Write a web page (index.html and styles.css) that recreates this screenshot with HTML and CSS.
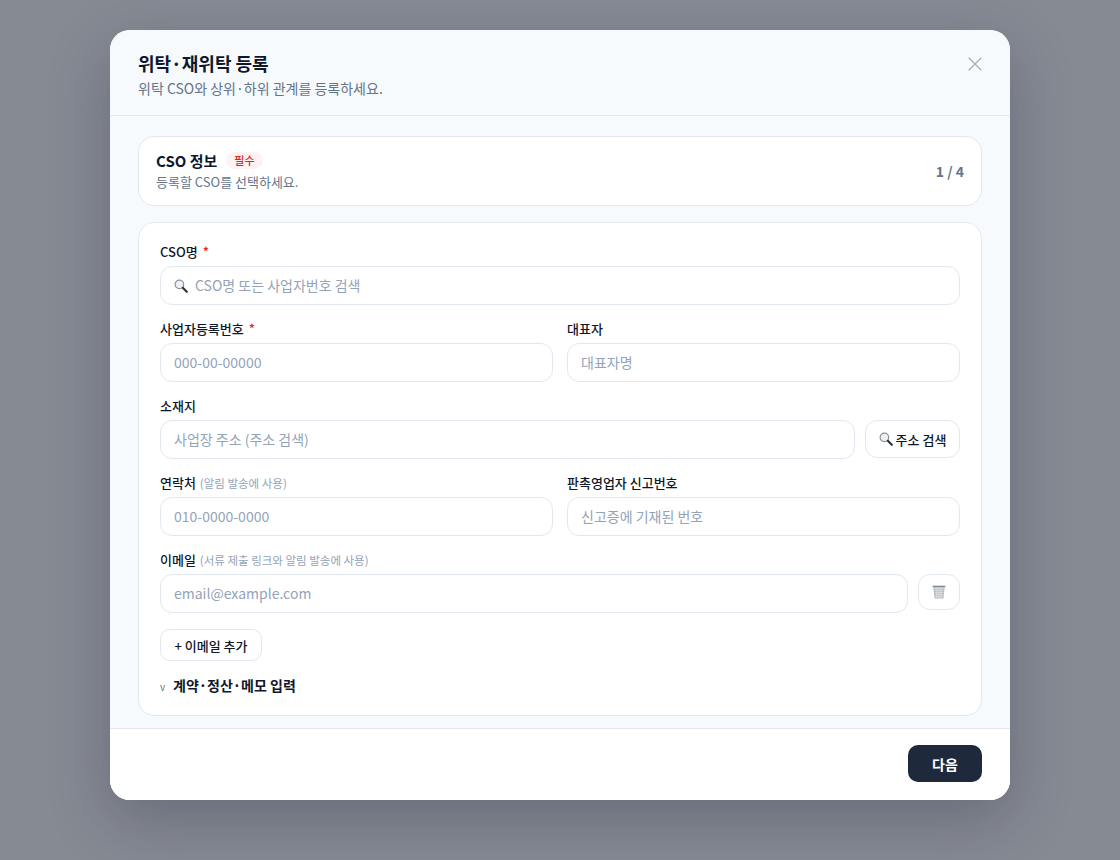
FILE: index.html
```html
<!DOCTYPE html>
<html>
<head>
<meta charset="utf-8">
<title>위탁·재위탁 등록</title>
<link rel="stylesheet" href="styles.css">
</head>
<body>
<div class="overlay">
  <div class="modal">
    <header class="modal-head">
      <div>
        <h1 class="title">위탁·재위탁 등록</h1>
        <p class="subtitle">위탁 CSO와 상위·하위 관계를 등록하세요.</p>
      </div>
      <svg class="close" viewBox="0 0 14 14" width="14" height="14"><path d="M.7.7l12.6 12.6M13.3.7L.7 13.3"/></svg>
    </header>
    <div class="modal-body">
      <section class="step">
        <div>
          <div class="step-title"><strong>CSO 정보</strong><span class="badge">필수</span></div>
          <p class="step-desc">등록할 CSO를 선택하세요.</p>
        </div>
        <span class="step-count">1 / 4</span>
      </section>
      <section class="form">
        <div class="field">
          <label class="label">CSO명 <em>*</em></label>
          <div class="input search"><svg class="glass" viewBox="0 0 14 14" width="14" height="14"><circle class="lens" cx="5.4" cy="5.4" r="4.3"/><path class="handle" d="M8.8 8.8l4 4"/></svg><span>CSO명 또는 사업자번호 검색</span></div>
        </div>
        <div class="cols">
          <div class="field">
            <label class="label">사업자등록번호 <em>*</em></label>
            <div class="input">000-00-00000</div>
          </div>
          <div class="field">
            <label class="label">대표자</label>
            <div class="input">대표자명</div>
          </div>
        </div>
        <div class="field">
          <label class="label">소재지</label>
          <div class="row">
            <div class="input grow">사업장 주소 (주소 검색)</div>
            <button class="btn addr"><svg class="glass" viewBox="0 0 14 14" width="14" height="14"><circle class="lens" cx="5.4" cy="5.4" r="4.3"/><path class="handle" d="M8.8 8.8l4 4"/></svg>주소 검색</button>
          </div>
        </div>
        <div class="cols">
          <div class="field">
            <label class="label">연락처 <small>(알림 발송에 사용)</small></label>
            <div class="input">010-0000-0000</div>
          </div>
          <div class="field">
            <label class="label">판촉영업자 신고번호</label>
            <div class="input">신고증에 기재된 번호</div>
          </div>
        </div>
        <div class="field">
          <label class="label">이메일 <small>(서류 제출 링크와 알림 발송에 사용)</small></label>
          <div class="row">
            <div class="input grow">email@example.com</div>
            <button class="btn trash"><svg viewBox="0 0 14 14" width="14" height="14"><path class="bin" d="M1.2 1h11.6l-1.3 11.8a.8.8 0 0 1-.8.7H3.3a.8.8 0 0 1-.8-.7z"/><path class="mesh" d="M2 3.5h10M2.3 5.5h9.4M2.5 7.5h9M2.7 9.5h8.6M2.9 11.5h8.2M4 2l.8 11M6 2l.4 11M8 2l-.4 11M10 2l-.8 11"/><path class="rim" d="M.6 1.3h12.8"/></svg></button>
          </div>
        </div>
        <button class="btn add">+ 이메일 추가</button>
        <div class="more"><span class="chev">v</span><strong>계약·정산·메모 입력</strong></div>
      </section>
    </div>
    <footer class="modal-foot"><button class="next">다음</button></footer>
  </div>
</div>
</body>
</html>
```
FILE: styles.css
```css
* { box-sizing: border-box; }
html, body { margin: 0; height: 100%; }
body {
  font-family: "Noto Sans CJK JP", "Noto Sans", sans-serif;
  color: #0f172a;
  background: #fff;
}
.overlay {
  height: 860px;
  background: #868a93;
  padding-top: 30px;
  display: flex;
  align-items: flex-start;
  justify-content: center;
}
.modal {
  width: 900px;
  height: 770px;
  border-radius: 20px;
  background: #fff;
  overflow: hidden;
  display: flex;
  flex-direction: column;
  box-shadow: 0 20px 60px rgba(15, 23, 42, .25);
}
.modal-head {
  height: 86px;
  flex: none;
  background: #f7fafd;
  border-bottom: 1px solid #e2e8f0;
  padding: 18px 28px 0;
  display: flex;
  justify-content: space-between;
  align-items: flex-start;
}
.title { margin: 0; font-size: 18px; line-height: 30px; font-weight: 700; }
.subtitle { margin: 0; font-size: 14px; line-height: 20px; color: #64748b; }
.close { margin: 9px 0 0; }
.close path { fill: none; stroke: #a6afbe; stroke-width: 1.3; }
.modal-body {
  flex: 1;
  background: #f7fafd;
  padding: 20px 28px 12px;
  display: flex;
  flex-direction: column;
  gap: 16px;
}
.step {
  height: 70px;
  border: 1px solid #e2e8f0;
  border-radius: 16px;
  background: #fff;
  padding: 0 17px;
  display: flex;
  align-items: center;
  justify-content: space-between;
}
.step-title { display: flex; align-items: center; gap: 9px; height: 20px; margin-top: -1px; font-size: 15px; }
.step-title strong { font-weight: 700; }
.badge {
  background: #fef2f2;
  color: #e02424;
  font-size: 11px;
  font-weight: 500;
  line-height: 17px;
  height: 17px;
  padding: 0 8px;
  border-radius: 9px;
}
.step-desc { margin: 2px 0 0; font-size: 13px; line-height: 19px; color: #64748b; }
.step-count { font-size: 14px; font-weight: 700; color: #64748b; }
.form {
  flex: 1;
  border: 1px solid #e2e8f0;
  border-radius: 16px;
  background: #fff;
  padding: 19px 21px 0;
  display: flex;
  flex-direction: column;
  align-items: stretch;
}
.field { margin-bottom: 14px; min-width: 0; }
.label { display: block; height: 24px; font-size: 13px; line-height: 20px; font-weight: 500; color: #0f172a; }
.label em { font-style: normal; color: #e02424; margin-left: 2px; }
.label small { font-size: 11.5px; font-weight: 400; color: #94a3b8; margin-left: 1px; }
.input {
  height: 39px;
  border: 1px solid #e2e8f0;
  border-radius: 12px;
  background: #fff;
  padding: 0 13px;
  font-size: 14px;
  line-height: 37px;
  color: #94a3b8;
}
.search { display: flex; align-items: center; gap: 7px; }
.cols { display: grid; grid-template-columns: 1fr 1fr; gap: 14px; }
.row { display: flex; gap: 10px; align-items: flex-start; }
.grow { flex: 1; }
.btn {
  border: 1px solid #e2e8f0;
  border-radius: 10px;
  background: #fff;
  font-family: inherit;
  color: #0f172a;
  font-size: 13px;
  font-weight: 500;
  padding: 0;
}
.addr { width: 95px; height: 38px; border-radius: 12px; display: flex; align-items: center; justify-content: center; gap: 3px; }
.trash { width: 42px; height: 36px; border-radius: 12px; display: flex; align-items: center; justify-content: center; }
.add { width: 102px; height: 32px; margin-top: 2px; }
.glass { flex: none; }
.lens { fill: #eef1f4; stroke: #8a929c; stroke-width: 1.2; }
.handle { stroke: #2f3338; stroke-width: 2.2; stroke-linecap: round; }
.bin { fill: #b4b8be; }
.rim { stroke: #7d838c; stroke-width: 1.2; }
.mesh { stroke: #dfe2e5; stroke-width: .7; fill: none; }
.more { display: flex; align-items: center; height: 24px; margin-top: 12px; font-size: 14px; }
.more strong { font-weight: 700; }
.chev { width: 13px; font-size: 10px; line-height: 24px; padding-top: 3px; color: #64748b; }
.modal-foot {
  height: 72px;
  flex: none;
  border-top: 1px solid #e2e8f0;
  background: #fff;
  padding: 16px 28px 0;
  display: flex;
  justify-content: flex-end;
}
.next {
  width: 74px;
  height: 37px;
  border: 0;
  border-radius: 10px;
  background: #1e293b;
  color: #fff;
  font-family: inherit;
  font-size: 14px;
  font-weight: 700;
}
```
